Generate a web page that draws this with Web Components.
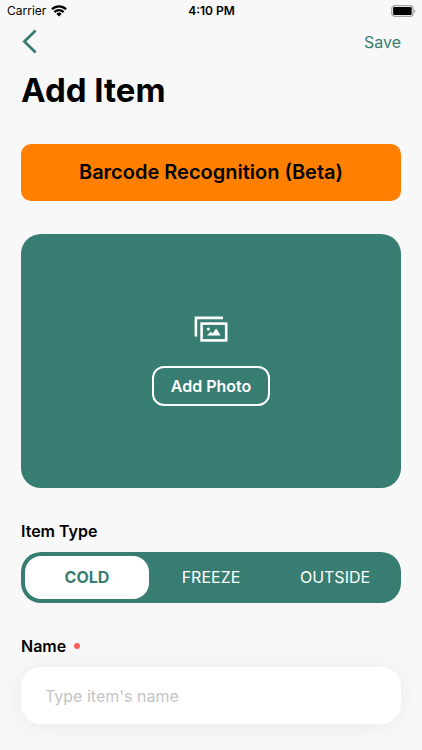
<!DOCTYPE html>
<html lang="en">
<head>
<meta charset="utf-8">
<meta name="viewport" content="width=device-width, initial-scale=1">
<title>Add Item</title>
<style>
:root { --brand: #387d72; --page: #f8f8f8; }
body { margin: 0; background: var(--page); color: #000; font-family: Inter, "Liberation Sans", sans-serif; font-size: 16px; line-height: 20px; }
</style>
</head>
<body>
<add-item-screen></add-item-screen>
<script>
const define = (name, html, setup) => {
  const template = document.createElement('template');
  template.innerHTML = `<style>*{box-sizing:border-box}button,input{font:inherit;margin:0}</style>${html}`;
  customElements.define(name, class extends HTMLElement {
    constructor() {
      super();
      this.attachShadow({ mode: 'open' }).append(template.content.cloneNode(true));
    }
    connectedCallback() { if (setup) setup(this, this.shadowRoot); }
  });
};

define('status-bar', `
<style>
:host { display: grid; grid-template-columns: 1fr auto 1fr; align-items: center; height: 22px; padding: 0 6px 0 7px; font-size: 12px; line-height: 22px; }
.left { display: flex; align-items: center; gap: 5px; }
.time { font-weight: 600; }
.battery { justify-self: end; }
svg { display: block; }
</style>
<div class="left"><span>Carrier</span>
<svg width="16" height="12" viewBox="0 0 16 12" aria-label="Wi-Fi"><g fill="none" stroke="#000" stroke-width="2.3"><path d="M1 4.3a10 10 0 0 1 14 0"/><path d="M3.4 7.1a6.5 6.5 0 0 1 9.2 0"/></g><path d="M5.4 8.9a3.7 3.7 0 0 1 5.2 0L8 11.6z"/></svg></div>
<span class="time">4:10 PM</span>
<svg class="battery" width="26" height="12" viewBox="0 0 26 12" aria-label="Battery full"><rect x="1.7" y=".7" width="21.4" height="10.6" rx="3" fill="none" stroke="#a2a2a2" stroke-width="1.2"/><rect x="3.1" y="2.1" width="18.6" height="7.8" rx="1.2"/><path d="M24.2 4.2c1.6.5 1.6 3.1 0 3.6z" fill="#999"/></svg>
`);

define('nav-bar', `
<style>
:host { display: flex; justify-content: space-between; align-items: center; height: 40px; color: var(--brand); }
button { border: 0; padding: 0; background: none; color: inherit; line-height: 24px; cursor: pointer; }
svg { display: block; }
</style>
<button type="button" aria-label="Back"><svg width="18" height="26" viewBox="0 0 18 26" fill="none" stroke="currentColor" stroke-width="2.8"><path d="M14.6 1.4 3.4 12.5 14.6 23.6"/></svg></button>
<button type="button"><slot></slot></button>
`);

define('banner-button', `
<style>
:host { display: block; }
button { display: block; width: 100%; padding: 16px; border: 0; border-radius: 10px; background: #ff8000; color: #000; font-size: 20px; line-height: 25px; font-weight: 600; cursor: pointer; }
</style>
<button type="button"><slot></slot></button>
`);

define('photo-picker', `
<style>
:host { display: flex; flex-direction: column; align-items: center; justify-content: center; gap: 22px; min-height: 254px; border-radius: 20px; background: var(--brand); color: #fff; }
svg { display: block; }
button { border: 2px solid #fff; border-radius: 12px; padding: 8px 17px; background: none; color: #fff; line-height: 20px; font-weight: 600; cursor: pointer; }
</style>
<svg width="34" height="28" viewBox="0 0 34 28" aria-hidden="true"><path d="M1.9 20.5V1.9H29" fill="none" stroke="#fff" stroke-width="2.6"/><rect x="7.6" y="7.6" width="24.6" height="16.8" fill="none" stroke="#fff" stroke-width="2.6"/><circle cx="14.3" cy="12.9" r="1.5" fill="#fff"/><path d="m13 19.5 3.7-3.8 2 1.8 3.4-5.1 4.6 7.1z" fill="#fff"/></svg>
<button type="button"><slot></slot></button>
`);

define('segmented-choice', `
<style>
:host { display: block; }
fieldset { border: 0; margin: 0; padding: 0; min-width: 0; }
legend { padding: 0; margin-bottom: 11px; font-weight: 600; }
.track { display: grid; grid-template-columns: repeat(3, 1fr); padding: 4px; border-radius: 20px; background: var(--brand); }
label { position: relative; display: block; border-radius: 16px; line-height: 43px; text-align: center; color: #fff; cursor: pointer; }
input { position: absolute; inset: 0; opacity: 0; }
label:has(:checked) { background: #fff; color: var(--brand); font-weight: 700; }
label:has(:focus-visible) { outline: 2px solid #fff; }
</style>
<fieldset><legend><slot></slot></legend>
<div class="track">
<label><input type="radio" name="type" value="cold" checked>COLD</label>
<label><input type="radio" name="type" value="freeze">FREEZE</label>
<label><input type="radio" name="type" value="outside">OUTSIDE</label>
</div></fieldset>
`);

define('text-field', `
<style>
:host { display: block; }
label { display: flex; align-items: center; gap: 8px; margin-bottom: 11px; font-weight: 600; }
.dot { width: 6px; height: 6px; border-radius: 50%; background: #ff5f57; }
input { display: block; width: 100%; padding: 16px 24px; border: 0; border-radius: 20px; background: #fff; color: #000; line-height: 25px; height: 57px; box-shadow: 0 2px 24px rgba(0,0,0,.06); }
input::placeholder { color: #c4c4c6; opacity: 1; }
</style>
<label for="field"><slot></slot><span class="dot"></span></label>
<input id="field" type="text" required>
`, (host, root) => { root.querySelector('input').placeholder = host.getAttribute('placeholder') || ''; });

define('add-item-screen', `
<style>
:host { display: block; }
main { padding: 0 21px 26px; }
h1 { margin: 0 0 26px; font-size: 33px; line-height: 56px; font-weight: 700; }
form { display: flex; flex-direction: column; gap: 33px; }
</style>
<status-bar></status-bar>
<main>
<nav-bar>Save</nav-bar>
<h1>Add Item</h1>
<form>
<banner-button>Barcode Recognition (Beta)</banner-button>
<photo-picker>Add Photo</photo-picker>
<segmented-choice>Item Type</segmented-choice>
<text-field placeholder="Type item's name">Name</text-field>
</form>
</main>
`);
</script>
</body>
</html>
